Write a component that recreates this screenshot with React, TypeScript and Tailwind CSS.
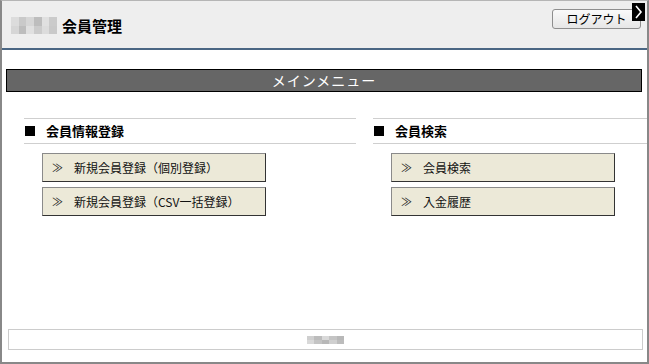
import React from "react";

const font = { fontFamily: '"Noto Sans CJK JP", "Noto Sans", sans-serif' };

function Blur({ w, h, cells }: { w: number; h: number; cells: string[] }) {
  return (
    <div className="flex" style={{ width: w, height: h }}>
      {cells.map((c, i) => (
        <div key={i} className="flex-1 flex flex-col">
          <div className="flex-1" style={{ background: c }} />
          <div className="flex-1" style={{ background: cells[(i + 2) % cells.length] }} />
        </div>
      ))}
    </div>
  );
}

function MenuButton({ label }: { label: string }) {
  return (
    <div className="w-[224px] h-[29px] bg-[#ece9d8] border border-t-[#8a8a8a] border-l-[#8a8a8a] border-b-[#333] border-r-[#333] flex items-center text-[12px] text-[#111]">
      <span className="ml-[9px] w-[22px] text-[11px] leading-none">≫</span>
      <span>{label}</span>
    </div>
  );
}

function Section({ title, items }: { title: string; items: string[] }) {
  return (
    <div className="flex flex-col">
      <div className="h-[26px] border-y border-[#cfcfcf] flex items-center">
        <span className="ml-[1px] w-[10px] h-[10px] bg-black" />
        <span className="ml-[11px] text-[13px] font-bold text-black">{title}</span>
      </div>
      <div className="pl-[18px] pt-[9px] flex flex-col gap-[5px]">
        {items.map((t) => (
          <MenuButton key={t} label={t} />
        ))}
      </div>
    </div>
  );
}

export default function App() {
  return (
    <div className="w-[649px] h-[364px] bg-white relative" style={font}>
      <div className="h-[364px] border-t border-t-[#b5b5b5] border-x-2 border-b-2 border-[#888] flex flex-col mt-0">
        <div className="h-[49px] bg-[#eeeeee] border-b-2 border-[#4a6683] flex items-start justify-between shrink-0">
          <div className="flex items-center mt-[16px] ml-[9px]">
            <Blur w={46} h={17} cells={["#dcdcdc", "#c9c9c9", "#d6d6d6", "#bdbdbd", "#e0e0e0", "#cbcbcb"]} />
            <span className="ml-[5px] text-[15px] font-bold text-black leading-[17px]">会員管理</span>
          </div>
          <div className="mt-[8px] mr-[6px] w-[89px] h-[20px] rounded-[3px] border border-[#8e8e8e] bg-gradient-to-b from-[#fafafa] to-[#e6e6e6] flex items-center justify-center text-[12px] text-black">
            ログアウト
          </div>
        </div>

        <div className="mt-[19px] ml-[4px] mr-[5px] h-[23px] bg-[#666666] border border-black flex items-center justify-center text-white text-[14px] tracking-[1px]">
          メインメニュー
        </div>

        <div className="mt-[26px] ml-[22px] flex gap-[17px]">
          <div className="w-[332px]">
            <Section title="会員情報登録" items={["新規会員登録（個別登録）", "新規会員登録（CSV一括登録）"]} />
          </div>
          <div className="flex-1">
            <Section title="会員検索" items={["会員検索", "入金履歴"]} />
          </div>
        </div>

        <div className="mt-auto mb-[12px] ml-[6px] mr-[4px] h-[21px] border border-[#cccccc] flex items-center justify-center">
          <Blur w={38} h={8} cells={["#cfcfcf", "#bcbcbc", "#d9d9d9", "#c4c4c4", "#b8b8b8"]} />
        </div>
      </div>

      <div className="absolute top-[3px] right-[4px] w-[13px] h-[18px] bg-black flex items-center justify-center">
        <svg width="9" height="14" viewBox="0 0 9 14">
          <path d="M2 1 L7 7 L2 13" stroke="white" strokeWidth="1.6" fill="none" />
        </svg>
      </div>
    </div>
  );
}
